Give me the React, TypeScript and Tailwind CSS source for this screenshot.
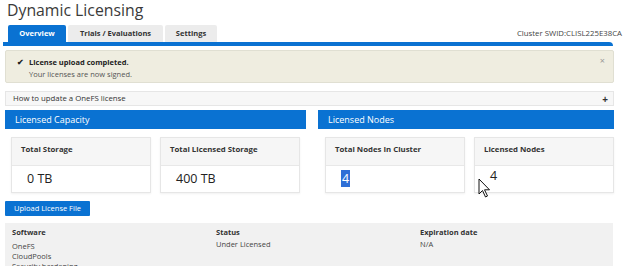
import React from 'react';

const BLUE = 'bg-[#0a72d2]';

type Stat = { label: string; value: string; selected?: boolean; cursor?: boolean };

const StatCard = ({ stat }: { stat: Stat }) => (
  <div className="relative w-[140px] border border-[#e6e6e6] shadow-[0_1px_2px_rgba(0,0,0,0.06)]">
    <div className="h-[28px] bg-[#f6f6f6] border-b border-[#e8e8e8] pl-[9px] pt-[6px] text-[7.8px] font-bold text-[#333]">
      {stat.label}
    </div>
    <div className="h-[26px] bg-white pl-[15px] pt-[4px] text-[12.5px] leading-[18px] text-[#222]">
      {stat.selected ? (
        <span className="bg-[#2f6fd6] text-white px-[1px]">{stat.value}</span>
      ) : stat.cursor ? (
        <span className="relative -top-[3px]">{stat.value}</span>
      ) : (
        stat.value
      )}
    </div>
    {stat.cursor && (
      <svg
        className="absolute left-[3px] top-[40px]"
        width="14"
        height="20"
        viewBox="0 0 14 20"
      >
        <path
          d="M1 1 L1 16 L4.5 12.5 L7.5 19 L9.5 18 L6.5 11.8 L11.5 11.8 Z"
          fill="#fff"
          stroke="#111"
          strokeWidth="1"
          strokeLinejoin="round"
        />
      </svg>
    )}
  </div>
);

const capacity: Stat[] = [
  { label: 'Total Storage', value: '0 TB' },
  { label: 'Total Licensed Storage', value: '400 TB' },
];

const nodes: Stat[] = [
  { label: 'Total Nodes In Cluster', value: '4', selected: true },
  { label: 'Licensed Nodes', value: '4', cursor: true },
];

const software = ['OneFS', 'CloudPools', 'Security hardening'];

export default function App() {
  return (
    <div className="relative w-[624px] h-[266px] overflow-hidden bg-white font-['Open_Sans',sans-serif] text-[#333]">
      <h1 className="h-[25px] pl-[7px] text-[15.8px] leading-[21px] text-[#3a3a3a]">
        Dynamic Licensing
      </h1>

      <div className="flex h-[17px] items-end justify-between">
        <div className="flex h-[17px] gap-[2px] pl-[8px]">
          <div className={`${BLUE} flex w-[58px] items-center justify-center rounded-t-[2px] text-[7.5px] font-bold text-white`}>
            Overview
          </div>
          <div className="flex w-[95px] items-center justify-center rounded-t-[2px] bg-[#ececec] text-[7.5px] font-bold text-[#333]">
            Trials / Evaluations
          </div>
          <div className="flex w-[52px] items-center justify-center rounded-t-[2px] bg-[#ececec] text-[7.5px] font-bold text-[#333]">
            Settings
          </div>
        </div>
        <div className="self-center pr-[2px] text-[7.8px] text-[#444]">
          Cluster SWID:CLISL225E38CA
        </div>
      </div>
      <div className={`${BLUE} ml-[3px] h-[4px] w-[610px] rounded-tr-[4px]`} />

      <div className="relative ml-[5px] mt-[4px] h-[33px] w-[609px] rounded-[2px] border border-[#e0dfd2] bg-[#efede0] pl-[11px] pt-[5px] text-[7.5px] leading-[12px]">
        <div className="flex items-center gap-[5px] font-bold text-[#222]">
          <span className="text-[8px]">✔</span>
          <span>License upload completed.</span>
        </div>
        <div className="pl-[12px] text-[#555]">Your licenses are now signed.</div>
        <span className="absolute right-[8px] top-[4px] text-[9px] text-[#999]">×</span>
      </div>

      <div className="ml-[5px] mt-[8px] flex h-[15px] w-[609px] items-center justify-between border border-[#e6e6e6] bg-[#f7f7f7] pl-[7px] pr-[5px] text-[7.8px] text-[#333]">
        <span>How to update a OneFS license</span>
        <span className="text-[10px] font-bold leading-none">+</span>
      </div>

      <div className="mt-[4px] flex">
        <div className="ml-[5px] w-[301px]">
          <div className={`${BLUE} flex h-[19px] items-center pl-[10px] text-[9px] text-white`}>
            Licensed Capacity
          </div>
          <div className="mt-[8px] flex gap-[9px] pl-[6px]">
            {capacity.map((s) => (
              <StatCard key={s.label} stat={s} />
            ))}
          </div>
        </div>
        <div className="ml-[12px] w-[296px]">
          <div className={`${BLUE} flex h-[19px] items-center pl-[10px] text-[9px] text-white`}>
            Licensed Nodes
          </div>
          <div className="mt-[8px] flex gap-[9px] pl-[7px]">
            {nodes.map((s) => (
              <StatCard key={s.label} stat={s} />
            ))}
          </div>
        </div>
      </div>

      <button className={`${BLUE} ml-[5px] mt-[8px] flex h-[15px] w-[85px] items-center justify-center rounded-[1px] text-[7.5px] text-white`}>
        Upload License File
      </button>

      <div className="ml-[5px] mt-[7px] w-[608px] bg-[#f1f1f1] pt-[3px] text-[7.5px] text-[#333]">
        <div className="grid grid-cols-[204px_204px_200px] pl-[7px] font-bold leading-[12px]">
          <span>Software</span>
          <span>Status</span>
          <span>Expiration date</span>
        </div>
        <div className="grid grid-cols-[204px_204px_200px] pl-[7px] pt-[1px] leading-[10px] text-[#444]">
          <div className="pt-[2px]">
            {software.map((s) => (
              <div key={s}>{s}</div>
            ))}
          </div>
          <div>Under Licensed</div>
          <div>N/A</div>
        </div>
      </div>
    </div>
  );
}
